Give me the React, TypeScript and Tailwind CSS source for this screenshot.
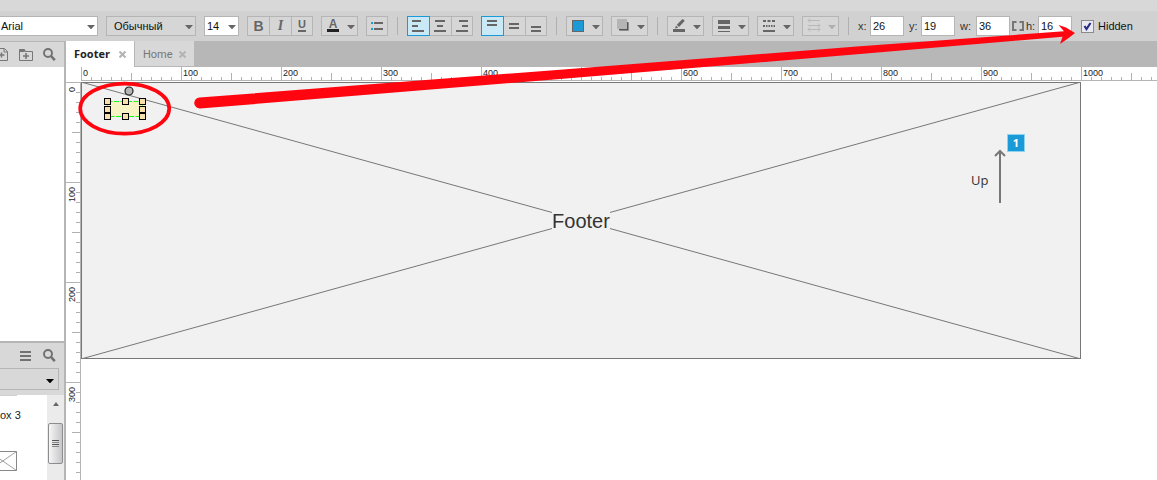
import React from "react";

const HUNDREDS = [0, 100, 200, 300, 400, 500, 600, 700, 800, 900, 1000];
const MINOR = [10, 20, 30, 40, 60, 70, 80, 90];

type Kids = { children?: React.ReactNode };

function Caret({ color = "#666666" }: { color?: string }) {
  return (
    <svg width="8" height="4" viewBox="0 0 8 4" className="block shrink-0">
      <path d="M0 0h8L4 4.4z" fill={color} />
    </svg>
  );
}

function Separator() {
  return <div className="mx-px h-[18px] w-px shrink-0 bg-[#b0b0b0]" />;
}

function FontSelect({ label, value, className }: { label: string; value: string; className: string }) {
  return (
    <div className={"relative h-5 shrink-0 border border-[#b5b5b5] " + className}>
      <select aria-label={label} className="block h-full w-full appearance-none bg-transparent text-[11px] text-[#111111] outline-none">
        <option>{value}</option>
      </select>
      <span className="pointer-events-none absolute inset-y-0 right-[2px] flex items-center pt-px">
        <Caret />
      </span>
    </div>
  );
}

function ToolButton({ label, active, last, children }: { label: string; active?: boolean; last?: boolean } & Kids) {
  return (
    <button
      type="button"
      aria-label={label}
      className={
        "-ml-px flex h-5 items-center justify-center border first:ml-0 " +
        (last ? "w-[22px] " : "w-[23px] ") +
        (active ? "z-10 border-[#1b9ad8] bg-[#c9e9f7]" : "border-[#b5b5b5] bg-[#d6d6d6]")
      }
    >
      {children}
    </button>
  );
}

function Lines({ rects }: { rects: number[][] }) {
  return (
    <svg width="20" height="18" viewBox="0 0 20 18" className="mr-auto block shrink-0" fill="#666666">
      {rects.map(([x, y, w], i) => (
        <rect key={i} x={x} y={y} width={w} height="2" />
      ))}
    </svg>
  );
}

function DropButton({ label, disabled, children }: { label: string; disabled?: boolean } & Kids) {
  return (
    <button type="button" aria-label={label} disabled={disabled} className="flex h-5 w-[37px] shrink-0 items-center border border-[#b5b5b5] bg-[#d6d6d6]">
      <svg width="25" height="18" viewBox="0 0 25 18" className="block shrink-0" fill="#666666">
        {children}
      </svg>
      <span className="pt-px">
        <Caret color={disabled ? "#b0b0b0" : "#666666"} />
      </span>
    </button>
  );
}

function NumberField({ label, value, wide }: { label: string; value: string; wide?: boolean }) {
  return (
    <label className="flex shrink-0 items-center">
      <span className={wide ? "w-4 text-[#333333]" : "w-3 text-[#333333]"}>{label}</span>
      <input type="text" defaultValue={value} className="h-5 w-[34px] border border-[#b5b5b5] bg-white pl-[2px] text-[11px] text-[#111111] outline-none" />
    </label>
  );
}

function Toolbar() {
  return (
    <div className="flex h-[30px] shrink-0 items-center gap-2 bg-[#d1d1d1] text-[11px]">
      <FontSelect label="Font" value="Arial" className="w-[98px] border-l-0 bg-white pl-px" />
      <FontSelect label="Style" value="Обычный" className="w-[90px] bg-[#d6d6d6] pl-[7px]" />
      <FontSelect label="Size" value="14" className="w-[35px] bg-white pl-[2px]" />
      <div className="flex shrink-0">
        <ToolButton label="Bold">
          <span className="text-[14px] leading-4 font-bold text-[#666666]">B</span>
        </ToolButton>
        <ToolButton label="Italic">
          <span className="font-['Liberation_Serif',serif] text-[14px] leading-4 font-bold text-[#666666] italic">I</span>
        </ToolButton>
        <ToolButton label="Underline" last>
          <span className="h-3 border-b-2 border-[#666666] text-[11px] leading-[9px] font-bold text-[#666666]">U</span>
        </ToolButton>
      </div>
      <button type="button" aria-label="Text color" className="flex h-5 w-[37px] shrink-0 items-center border border-[#b5b5b5] bg-[#d6d6d6] pl-[5px]">
        <span className="h-3 w-3 border-b-3 border-[#222222] text-center text-[12px] leading-[9px] font-bold text-[#666666]">A</span>
        <span className="pt-px pl-2">
          <Caret />
        </span>
      </button>
      <button type="button" aria-label="Bullets" className="flex h-5 w-[22px] shrink-0 items-center border border-[#b5b5b5] bg-[#d6d6d6]">
        <svg width="20" height="18" viewBox="0 0 20 18" className="block">
          <path d="M4 5h2v2H4zM4 11h2v2H4z" fill="#1b9ad8" />
          <path d="M7 5h9v2H7zM7 11h9v2H7z" fill="#666666" />
        </svg>
      </button>
      <Separator />
      <div className="flex shrink-0">
        <ToolButton label="Align left" active>
          <Lines rects={[[4, 3, 9], [4, 8, 6], [4, 13, 12]]} />
        </ToolButton>
        <ToolButton label="Align center">
          <Lines rects={[[5, 3, 10], [7, 8, 6], [4, 13, 12]]} />
        </ToolButton>
        <ToolButton label="Align right" last>
          <Lines rects={[[7, 3, 9], [10, 8, 6], [4, 13, 12]]} />
        </ToolButton>
      </div>
      <div className="flex shrink-0">
        <ToolButton label="Align top" active>
          <Lines rects={[[5, 3, 10], [5, 7, 10]]} />
        </ToolButton>
        <ToolButton label="Align middle">
          <Lines rects={[[5, 6, 10], [5, 10, 10]]} />
        </ToolButton>
        <ToolButton label="Align bottom" last>
          <Lines rects={[[5, 9, 10], [5, 13, 10]]} />
        </ToolButton>
      </div>
      <Separator />
      <DropButton label="Fill color">
        <rect x="5.5" y="3.5" width="11" height="11" fill="#1b9ad8" stroke="#666666" />
      </DropButton>
      <DropButton label="Shadow">
        <rect x="7" y="5" width="10" height="9" rx="1" fill="#8c8c8c" />
        <rect x="7" y="5" width="9" height="8" fill="#555555" />
        <rect x="5" y="2" width="10" height="10" fill="#b5b5b5" />
      </DropButton>
      <Separator />
      <DropButton label="Line color">
        <path d="M5 12h12v3H5z" />
        <path d="M7 11.5l1-3 2.2 2.2zM8.8 7.7L14.2 2.3c.8-.7 2.9 1.2 2.2 2L11 9.9z" />
      </DropButton>
      <DropButton label="Line width">
        <path d="M5 3h12v4H5zM5 9h12v3H5zM5 14h12v1H5z" />
      </DropButton>
      <DropButton label="Line style">
        <path d="M5 3h3v2H5zM9.500 3h3v2h-3zM14 3h3v2h-3zM5 8h2v2H5zM8 8h1.500v2H8zM10.500 8H12v2h-1.500zM13 8h1.500v2H13zM15.500 8H17v2h-1.500zM5 13h12v2H5z" />
      </DropButton>
      <DropButton label="Arrow style" disabled>
        <path d="M5 3.500h12M5 8.500h12M5 12.500h12M7 1.500l-2 2 2 2M15 6.500l2 2-2 2M7 10.500l-2 2 2 2M15 10.500l2 2-2 2" fill="none" stroke="#b8b8b8" />
      </DropButton>
      <Separator />
      <div className="flex shrink-0 items-center gap-[5px]">
        <NumberField label="x:" value="26" />
        <NumberField label="y:" value="19" />
        <NumberField label="w:" value="36" wide />
      </div>
      <div className="-ml-[6px] flex shrink-0 items-center gap-[2px]">
        <svg width="12" height="10" viewBox="0 0 12 10" fill="none" stroke="#777777" strokeWidth="2">
          <path d="M4.500 1H1v8h3.500M7.500 1H11v8H7.500" />
        </svg>
        <NumberField label="h:" value="16" />
      </div>
      <label className="flex shrink-0 items-center gap-1 pt-px pl-px text-[#111111]">
        <span className="relative block h-[13px] w-[13px]">
          <input type="checkbox" defaultChecked className="peer block h-[13px] w-[13px] appearance-none border border-[#8a8a8a] bg-[#e9e9f1]" />
          <svg viewBox="0 0 13 13" className="pointer-events-none absolute inset-0 hidden h-[13px] w-[13px] peer-checked:block">
            <path d="M3.500 6l2 3L9.500 3" fill="none" stroke="#2c2c84" strokeWidth="2.200" />
          </svg>
        </span>
        Hidden
      </label>
    </div>
  );
}

function SearchIcon() {
  return (
    <svg width="13" height="13" viewBox="0 0 13 13" fill="none" stroke="#717171" className="block">
      <circle cx="5" cy="5" r="4" strokeWidth="1.900" />
      <path d="M8 8l3.800 4.200" strokeWidth="2.600" />
    </svg>
  );
}

function Sidebar() {
  return (
    <aside className="flex w-[66px] shrink-0 flex-col border-r-2 border-[#b5b5b5] bg-white">
      <div className="flex h-[26px] shrink-0 items-center border-t border-[#b8b8b8] bg-[#d8d8d8]">
        <button type="button" aria-label="Add page" className="mr-[11px]">
          <svg width="8" height="13" viewBox="0 0 8 13" fill="none" stroke="#777777" className="block">
            <path d="M0 .5h4.500l3 3v9H0M4 .5v3.500h3.500" />
            <path d="M0 7h4.500M1.500 4.500v5" strokeWidth="1.500" />
          </svg>
        </button>
        <button type="button" aria-label="Add folder" className="mr-[10px]">
          <svg width="14" height="12" viewBox="0 0 14 12" fill="none" stroke="#777777" className="block">
            <path d="M.5 11.500V.5h5l1 2h7v9z" />
            <path d="M.5 1h5v1.500h-5z" fill="#777777" />
            <path d="M4 7h6M7 4v6" strokeWidth="1.600" />
          </svg>
        </button>
        <button type="button" aria-label="Search pages">
          <SearchIcon />
        </button>
      </div>
      <div className="h-[274px] shrink-0 bg-white" />
      <div className="flex h-[54px] shrink-0 flex-col border-t-2 border-[#b5b5b5] bg-[#d8d8d8]">
        <div className="flex h-[25px] items-center gap-3 pl-5">
          <button type="button" aria-label="Library menu">
            <svg width="11" height="10" viewBox="0 0 11 10" fill="#717171" className="block">
              <path d="M0 0h11v2H0zM0 4h11v2H0zM0 8h11v2H0z" />
            </svg>
          </button>
          <button type="button" aria-label="Search library">
            <SearchIcon />
          </button>
        </div>
        <div className="relative mr-[5px] h-[22px] border border-l-0 border-[#b5b5b5]">
          <select aria-label="Library" className="block h-full w-full appearance-none bg-transparent outline-none" />
          <span className="pointer-events-none absolute inset-y-0 right-1 flex items-center pt-[3px]">
            <Caret color="#000000" />
          </span>
        </div>
      </div>
      <div className="flex min-h-0 flex-1">
        <div className="flex min-w-0 flex-1 flex-col overflow-hidden">
          <div className="h-px w-[17px] shrink-0 bg-[#cfcfcf]" />
          <div className="mt-[11px] text-[11px] leading-4 whitespace-nowrap text-[#222222]">ox 3</div>
          <svg width="17" height="20" viewBox="0 0 17 20" className="mt-7 block shrink-0" fill="none" stroke="#888888">
            <path d="M0 .5h16.500v19H0" />
            <path d="M-11 .5l27.500 19M-11 19.500L16.500.5" strokeWidth=".8" />
          </svg>
        </div>
        <div className="flex w-[17px] flex-col items-center bg-[#ebebeb]">
          <svg width="6" height="4" viewBox="0 0 6 4" className="mt-[7px] block" fill="#666666">
            <path d="M0 4h6L3 0z" />
          </svg>
          <div className="mt-[17px] flex h-[41px] w-[15px] flex-col items-center justify-center gap-px rounded-[2px] border border-[#8c8c8c] bg-linear-to-r from-[#f6f6f6] to-[#c6c6ca]">
            <i className="block h-px w-[7px] bg-[#555555]" />
            <i className="block h-px w-[7px] bg-[#888888]" />
            <i className="block h-px w-[7px] bg-[#555555]" />
            <i className="block h-px w-[7px] bg-[#888888]" />
          </div>
        </div>
      </div>
    </aside>
  );
}

function CloseIcon() {
  return (
    <svg width="7" height="7" viewBox="0 0 7 7" className="block" fill="none" stroke="#b3b3b3" strokeWidth="2">
      <path d="M.5.5l6 6M6.500.5l-6 6" />
    </svg>
  );
}

function Tabs() {
  return (
    <div className="flex h-[26px] shrink-0 bg-[#b7b7b7]">
      <div className="flex w-[68px] items-center justify-between bg-white pr-2 pl-2">
        <a href="#footer" className="font-['Open_Sans',sans-serif] text-[11px] leading-4 font-bold text-[#222222]">Footer</a>
        <button type="button" aria-label="Close Footer">
          <CloseIcon />
        </button>
      </div>
      <div className="ml-px flex h-[25px] w-[59px] items-center justify-between bg-[#d8d8d8] pt-[2px] pr-2 pl-2">
        <a href="#home" className="pt-px font-['Roboto',sans-serif] text-[11px] leading-4 text-[#777777]">Home</a>
        <button type="button" aria-label="Close Home">
          <CloseIcon />
        </button>
      </div>
    </div>
  );
}

function HorizontalRuler() {
  return (
    <div className="flex h-[15px] shrink-0 overflow-hidden bg-white">
      <div className="w-[15px] shrink-0" />
      {HUNDREDS.map((n) => (
        <div key={n} className="relative h-[14px] w-[100px] shrink-0 border-b border-l border-[#b5b5b5] pl-px text-[9px] leading-3 text-[#222222]">
          <svg width="100" height="14" className="absolute -left-px top-0 block" fill="#b0b0b0">
            <rect x="50" y="6" width="1" height="8" />
            {MINOR.map((m) => (
              <rect key={m} x={m} y="10" width="1" height="4" />
            ))}
          </svg>
          <span className="relative">{n}</span>
        </div>
      ))}
    </div>
  );
}

function VerticalRuler() {
  return (
    <div className="flex w-[15px] shrink-0 flex-col overflow-hidden border-r border-[#b5b5b5] bg-white">
      {HUNDREDS.slice(0, 4).map((n) => (
        <div key={n} className="relative h-[100px] shrink-0 border-t border-[#b5b5b5] pt-1 text-[9px] leading-3 text-[#222222]">
          <svg width="14" height="100" className="absolute -top-px left-0 block" fill="#b0b0b0">
            <rect x="6" y="50" width="8" height="1" />
            {MINOR.map((m) => (
              <rect key={m} x="10" y={m} width="4" height="1" />
            ))}
          </svg>
          <span className="relative block rotate-180 [writing-mode:vertical-rl]">{n}</span>
        </div>
      ))}
    </div>
  );
}

const HANDLES = [
  [23, 16], [41, 16], [58, 16],
  [23, 24], [58, 24],
  [23, 31], [41, 31], [58, 31],
];

function Canvas() {
  return (
    <div className="min-w-0 flex-1 overflow-hidden bg-white">
      <div className="relative flex h-[277px] w-[1000px] items-center justify-center bg-[#f1f1f1]">
        <svg width="1000" height="277" className="absolute inset-0 block" fill="none" stroke="#777777">
          <rect x=".5" y=".5" width="999" height="276" />
          <path d="M0 0l1000 277M0 277L1000 0" />
          <path d="M919 121V70M914 74l5-5 5 5" strokeWidth="2" />
        </svg>
        <span className="relative bg-[#f1f1f1] text-[20px] leading-[22px] text-[#333333]">Footer</span>
        <span className="absolute top-[88px] left-[890px] font-['Open_Sans',sans-serif] text-[13px] leading-5 text-[#333333]">Up</span>
        <span className="absolute top-[52px] left-[926px] flex h-[18px] w-[18px] items-center justify-center border border-[#8fd3f0] bg-[#1b9ad8] font-['Open_Sans',sans-serif] text-[11px] leading-4 font-bold text-white">
          1
        </span>
        <svg width="90" height="50" className="absolute top-0 left-0 block">
          <rect x="26" y="19" width="36" height="16" fill="#f6f3c4" />
          <rect x="26.500" y="19.500" width="35" height="15" fill="none" stroke="#19f519" strokeDasharray="5 1.500" />
          {HANDLES.map(([x, y]) => (
            <rect key={x + "-" + y} x={x + 0.5} y={y + 0.5} width="6" height="6" fill="#f7dfae" stroke="#000000" />
          ))}
          <circle cx="48" cy="9" r="4" fill="#b5b5b5" stroke="#222222" strokeWidth="1.200" />
        </svg>
      </div>
    </div>
  );
}

function Annotations() {
  return (
    <svg width="1157" height="480" viewBox="0 0 1157 480" className="pointer-events-none absolute top-0 left-0 z-20 block">
      <ellipse cx="124.700" cy="108.600" rx="44.500" ry="25" fill="none" stroke="#ff0510" strokeWidth="3.700" />
      <path
        d="M199.500 97.500L560 69.700 860 46.300 1064 31.300 1058.500 25 1066 27.500 1075 33 1068 38.500 1060 44 1062.500 36.800 860 54 560 78.900 200 108.500A5.500 5.500 0 0 1 199.500 97.500z"
        fill="#ff0510"
      />
    </svg>
  );
}

export default function App() {
  return (
    <div className="relative flex h-screen min-h-[480px] flex-col overflow-hidden bg-white font-['Liberation_Sans',Arial,sans-serif]">
      <div className="h-[11px] shrink-0 bg-[#d8d8d8]" />
      <Toolbar />
      <div className="flex min-h-0 flex-1">
        <Sidebar />
        <main className="flex min-w-0 flex-1 flex-col">
          <Tabs />
          <HorizontalRuler />
          <div className="flex min-h-0 flex-1">
            <VerticalRuler />
            <Canvas />
          </div>
        </main>
      </div>
      <Annotations />
    </div>
  );
}
